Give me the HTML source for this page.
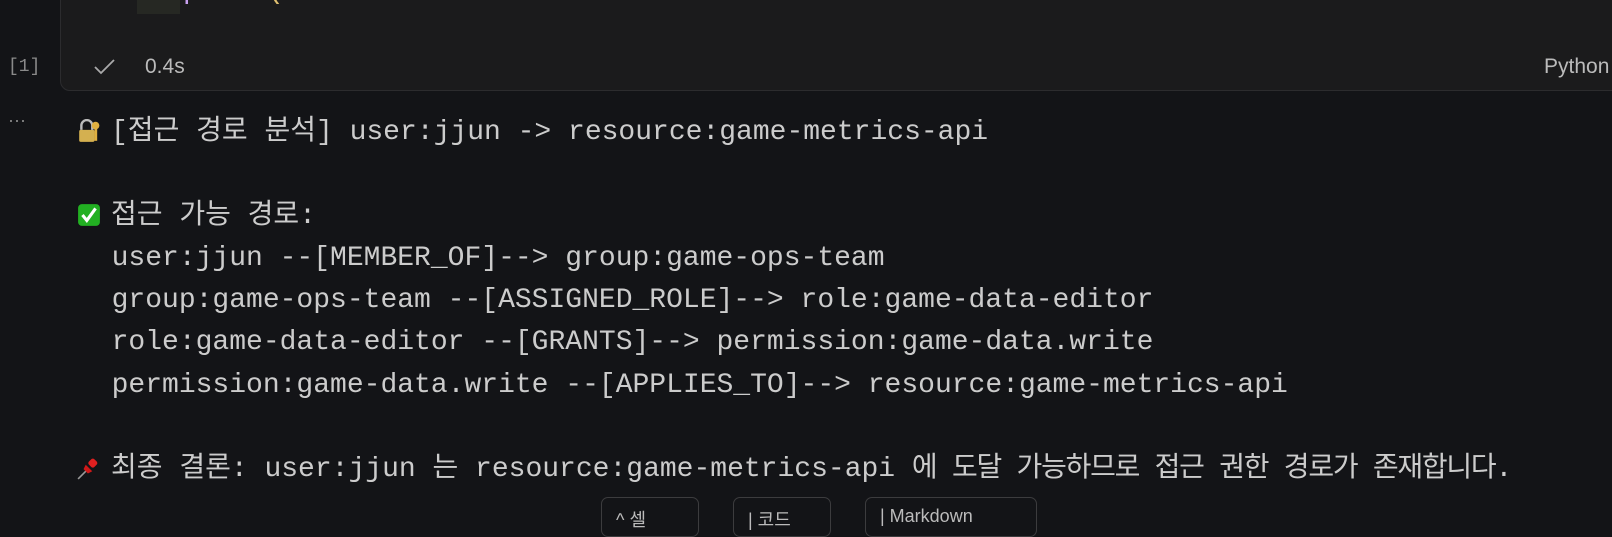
<!DOCTYPE html>
<html><head><meta charset="utf-8"><style>
body{margin:0;width:1612px;height:512px;background:#131417;overflow:hidden;position:relative;font-family:"Liberation Sans",sans-serif}
.cell{position:absolute;left:60px;top:-20px;width:1600px;height:109px;background:#1b1b1c;border:1px solid #2c2c2e;border-radius:10px}
.out{position:absolute;left:78px;top:112px;font-family:"Liberation Mono","Noto Sans CJK KR",monospace;font-size:28px;line-height:42.1px;color:#cccccc;white-space:pre}
.ic{display:inline-block;width:24px;height:24px;vertical-align:-4px;margin-right:10px;margin-left:-1px}
.k{letter-spacing:-1.25px}
.btn{position:absolute;top:497px;height:40px;border:1px solid #3c3c3e;border-radius:7px;color:#bbb;font-size:18px;padding-left:14px;padding-top:8px;box-sizing:border-box}
</style></head><body>
<div class="cell"></div>
<div style="position:absolute;left:137px;top:0;width:43px;height:14px;background:#262823"></div>
<div style="position:absolute;left:183px;top:-24px;font-family:'Liberation Mono',monospace;font-size:28px;color:#c9a0f0">print<span style="color:#e0c070">(</span><span style="color:#e02020">♦♦</span></div>
<div style="position:absolute;left:8px;top:57px;color:#8a8a8a;font-family:'Liberation Mono',monospace;font-size:18px">[1]</div>
<div style="position:absolute;left:8px;top:110px;color:#8a8a8a;font-size:18px">···</div>
<svg style="position:absolute;left:93px;top:58px" width="24" height="18"><path d="M2 9 L8 15 L21 2" stroke="#aaa" stroke-width="1.8" fill="none"/></svg>
<div style="position:absolute;left:145px;top:55px;color:#bbb;font-size:21px">0.4s</div>
<div style="position:absolute;left:1544px;top:55px;color:#bbb;font-size:21px">Python</div>
<div class="out"><svg class="ic" viewBox="0 0 22 22"><path d="M4 10 V6 a5 5 0 0 1 10 0 V10" stroke="#bbb" stroke-width="2.2" fill="none"/><rect x="2" y="10" width="14" height="11" rx="1.5" fill="#d4b050"/><circle cx="17" cy="6" r="3.5" fill="#e0b040"/><rect x="16" y="8" width="2.5" height="12" fill="#e0b040"/></svg>[접근 경로 분석] user:jjun -&gt; resource:game-metrics-api

<svg class="ic" viewBox="0 0 22 22"><rect x="1" y="1" width="20" height="20" rx="3.5" fill="#22b022"/><path d="M5 11 L9 16 L17 5" stroke="#fff" stroke-width="2.8" fill="none"/></svg>접근 가능 경로:
  user:jjun --[MEMBER_OF]--&gt; group:game-ops-team
  group:game-ops-team --[ASSIGNED_ROLE]--&gt; role:game-data-editor
  role:game-data-editor --[GRANTS]--&gt; permission:game-data.write
  permission:game-data.write --[APPLIES_TO]--&gt; resource:game-metrics-api

<svg class="ic" viewBox="0 0 22 22"><path d="M1 21 L9 13" stroke="#999" stroke-width="1.5"/><path d="M8 8 L14 14 L10 16 L6 12 Z" fill="#d01818"/><rect x="11" y="3" width="7" height="7" rx="2" transform="rotate(45 14.5 6.5)" fill="#e02020"/></svg>최종 결론: user:jjun 는 resource:game-metrics-api <span class="k">에 도달 가능하므로 접근 권한 경로가 존재합니다.</span></div>
<div class="btn" style="left:601px;width:98px">^ 셀</div>
<div class="btn" style="left:733px;width:98px">| 코드</div>
<div class="btn" style="left:865px;width:172px">| Markdown</div>
</body></html>
